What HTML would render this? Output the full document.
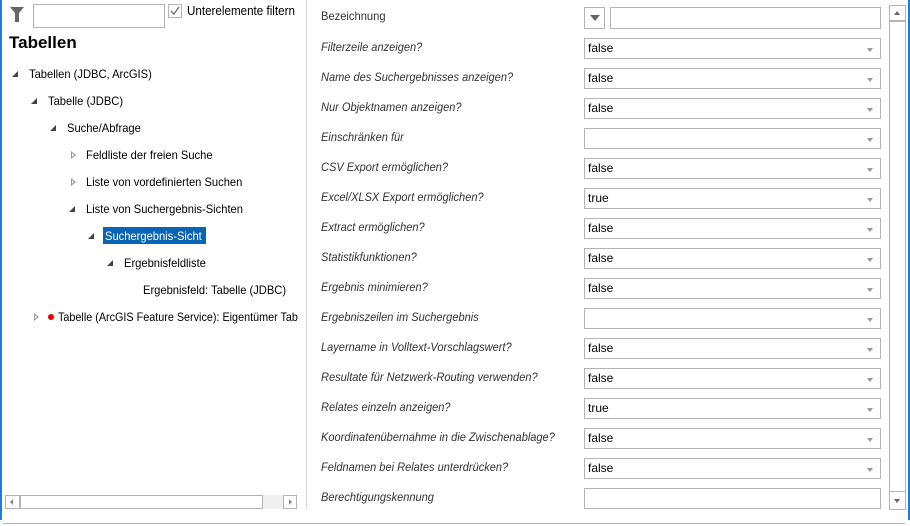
<!DOCTYPE html>
<html><head><meta charset="utf-8"><style>
*{margin:0;padding:0;box-sizing:border-box}
body{width:910px;height:526px;background:#fff;position:relative;overflow:hidden;font-family:"Liberation Sans",sans-serif;font-size:12px;color:#000}
.a{position:absolute}
.lbl{position:absolute;left:321px;font-style:italic;color:#333;font-size:12px;white-space:nowrap;transform:scaleX(.92);transform-origin:left}
.box{position:absolute;left:584px;width:297px;height:21px;border:1px solid #b4b4b4;background:#fff;padding-left:3px;line-height:19px;font-size:12px;color:#000}
.box:after{content:"";position:absolute;right:7px;top:9px;border-left:3px solid transparent;border-right:3px solid transparent;border-top:4px solid #999}
.nb:after{display:none}
.t{position:absolute;white-space:nowrap;font-size:12px;transform:scaleX(.93);transform-origin:left}
.tri{position:absolute;width:0;height:0;border-left:6px solid transparent;border-bottom:6px solid #444}
.tri2{position:absolute;width:0;height:0;border-top:4px solid transparent;border-bottom:4px solid transparent;border-left:5px solid #999}
.tri2:after{content:"";position:absolute;left:-4px;top:-2px;border-top:2px solid transparent;border-bottom:2px solid transparent;border-left:2.5px solid #fff}
#left{position:absolute;left:0;top:0;width:306px;height:526px;overflow:hidden}
</style></head><body>
<div id="left">
<svg class="a" style="left:9px;top:6px" width="16" height="17"><path d="M1 1H15L10 7V16H6V7Z" fill="#666"/></svg>
<div class="a" style="left:33px;top:4px;width:132px;height:24px;border:1px solid #b4b4b4"></div>
<div class="a" style="left:168px;top:4px;width:14px;height:14px;border:1px solid #b4b4b4"></div>
<svg class="a" style="left:170px;top:6px" width="10" height="10"><path d="M1 5L4 8L9 1" stroke="#777" stroke-width="1.5" fill="none"/></svg>
<div class="t" style="left:187px;top:4px;font-size:12.5px">Unterelemente filtern</div>
<div class="a" style="left:9px;top:33px;font-weight:bold;font-size:17px">Tabellen</div>
<div class="tri" style="left:12px;top:71px"></div><div class="t" style="left:29px;top:67px">Tabellen (JDBC, ArcGIS)</div>
<div class="tri" style="left:31px;top:98px"></div><div class="t" style="left:48px;top:94px">Tabelle (JDBC)</div>
<div class="tri" style="left:50px;top:125px"></div><div class="t" style="left:67px;top:121px">Suche/Abfrage</div>
<div class="tri2" style="left:71px;top:151px"></div><div class="t" style="left:86px;top:148px">Feldliste der freien Suche</div>
<div class="tri2" style="left:71px;top:178px"></div><div class="t" style="left:86px;top:175px">Liste von vordefinierten Suchen</div>
<div class="tri" style="left:69px;top:206px"></div><div class="t" style="left:86px;top:202px">Liste von Suchergebnis-Sichten</div>
<div class="tri" style="left:88px;top:233px"></div>
<div class="a" style="left:103px;top:227px;width:103px;height:17px;background:#0a64b4"></div>
<div class="t" style="left:105px;top:229px;color:#fff">Suchergebnis-Sicht</div>
<div class="tri" style="left:107px;top:260px"></div><div class="t" style="left:124px;top:256px">Ergebnisfeldliste</div>
<div class="t" style="left:143px;top:283px">Ergebnisfeld: Tabelle (JDBC)</div>
<div class="tri2" style="left:34px;top:313px"></div>
<div class="a" style="left:48px;top:314px;width:6px;height:6px;border-radius:50%;background:#e00"></div>
<div class="t" style="left:58px;top:310px;transform:scaleX(.9)">Tabelle (ArcGIS Feature Service): Eigentümer Tab</div>
<div class="a" style="left:5px;top:495px;width:292px;height:14px;background:#f0f0f0"></div>
<div class="a" style="left:5px;top:495px;width:15px;height:14px;border:1px solid #b4b4b4;background:#fff"></div>
<div class="a" style="left:20px;top:495px;width:243px;height:14px;border:1px solid #b4b4b4;background:#fff"></div>
<div class="a" style="left:283px;top:495px;width:14px;height:14px;border:1px solid #b4b4b4;background:#fff"></div>
<div class="a" style="left:10px;top:499px;border-top:3px solid transparent;border-bottom:3px solid transparent;border-right:3px solid #888"></div>
<div class="a" style="left:289px;top:499px;border-top:3px solid transparent;border-bottom:3px solid transparent;border-left:3px solid #888"></div>
</div>
<div class="a" style="left:0;top:0;width:2px;height:520px;background:#1a7fd4"></div>
<div class="a" style="left:908px;top:0;width:2px;height:520px;background:#1a7fd4"></div>
<div class="a" style="left:3px;top:523px;width:902px;height:1px;background:#b4b4b4"></div>
<div class="a" style="left:306px;top:0;width:1px;height:510px;background:#dcdcdc"></div>
<div class="a" style="left:889px;top:5px;width:17px;height:505px;border:1px solid #b4b4b4"></div>
<div class="a" style="left:889px;top:20px;width:17px;height:472px;border:1px solid #b4b4b4;border-top:2px solid #b4b4b4"></div>
<div class="a" style="left:894px;top:11px;border-left:3.5px solid transparent;border-right:3.5px solid transparent;border-bottom:4px solid #666"></div>
<div class="a" style="left:894px;top:499px;border-left:3.5px solid transparent;border-right:3.5px solid transparent;border-top:4px solid #666"></div>
<div class="t" style="left:321px;top:9px;color:#333">Bezeichnung</div>
<div class="a" style="left:584px;top:7px;width:21px;height:22px;border:1px solid #b4b4b4"></div>
<div class="a" style="left:590px;top:15px;border-left:5px solid transparent;border-right:5px solid transparent;border-top:6px solid #666"></div>
<div class="a" style="left:610px;top:7px;width:271px;height:22px;border:1px solid #b4b4b4"></div>
<div class="lbl" style="top:40px">Filterzeile anzeigen?</div><div class="box" style="top:38px">false</div>
<div class="lbl" style="top:70px">Name des Suchergebnisses anzeigen?</div><div class="box" style="top:68px">false</div>
<div class="lbl" style="top:100px">Nur Objektnamen anzeigen?</div><div class="box" style="top:98px">false</div>
<div class="lbl" style="top:130px">Einschränken für</div><div class="box" style="top:128px"></div>
<div class="lbl" style="top:160px">CSV Export ermöglichen?</div><div class="box" style="top:158px">false</div>
<div class="lbl" style="top:190px">Excel/XLSX Export ermöglichen?</div><div class="box" style="top:188px">true</div>
<div class="lbl" style="top:220px">Extract ermöglichen?</div><div class="box" style="top:218px">false</div>
<div class="lbl" style="top:250px">Statistikfunktionen?</div><div class="box" style="top:248px">false</div>
<div class="lbl" style="top:280px">Ergebnis minimieren?</div><div class="box" style="top:278px">false</div>
<div class="lbl" style="top:310px">Ergebniszeilen im Suchergebnis</div><div class="box" style="top:308px"></div>
<div class="lbl" style="top:340px">Layername in Volltext-Vorschlagswert?</div><div class="box" style="top:338px">false</div>
<div class="lbl" style="top:370px">Resultate für Netzwerk-Routing verwenden?</div><div class="box" style="top:368px">false</div>
<div class="lbl" style="top:400px">Relates einzeln anzeigen?</div><div class="box" style="top:398px">true</div>
<div class="lbl" style="top:430px">Koordinatenübernahme in die Zwischenablage?</div><div class="box" style="top:428px">false</div>
<div class="lbl" style="top:460px">Feldnamen bei Relates unterdrücken?</div><div class="box" style="top:458px">false</div>
<div class="lbl" style="top:490px">Berechtigungskennung</div><div class="box nb" style="top:488px"></div>
</body></html>
